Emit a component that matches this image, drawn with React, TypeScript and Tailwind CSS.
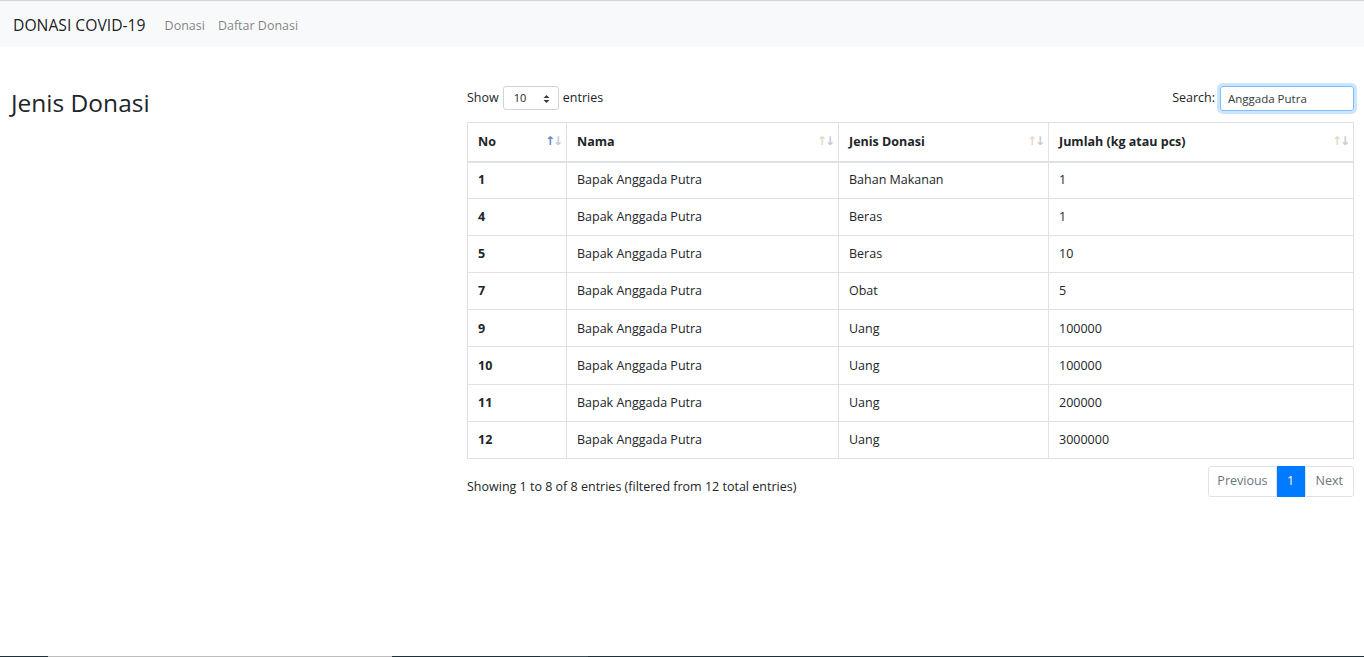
import React, { useState } from 'react'

const rows = [
  { no: 1, nama: 'Bapak Anggada Putra', jenis: 'Bahan Makanan', jumlah: '1' },
  { no: 4, nama: 'Bapak Anggada Putra', jenis: 'Beras', jumlah: '1' },
  { no: 5, nama: 'Bapak Anggada Putra', jenis: 'Beras', jumlah: '10' },
  { no: 7, nama: 'Bapak Anggada Putra', jenis: 'Obat', jumlah: '5' },
  { no: 9, nama: 'Bapak Anggada Putra', jenis: 'Uang', jumlah: '100000' },
  { no: 10, nama: 'Bapak Anggada Putra', jenis: 'Uang', jumlah: '100000' },
  { no: 11, nama: 'Bapak Anggada Putra', jenis: 'Uang', jumlah: '200000' },
  { no: 12, nama: 'Bapak Anggada Putra', jenis: 'Uang', jumlah: '3000000' },
]

const SortIcon = ({ active }: { active?: boolean }) => (
  <span className="absolute right-[5px] top-[12px] font-['DejaVu_Sans',sans-serif] text-[12px] leading-none tracking-[-2px]">
    <span className={active ? 'text-[#5a8cc0]' : 'text-[#e6d9c8]'}>↑</span>
    <span className="text-[#c5cbd3]">↓</span>
  </span>
)

const App = () => {
  const [search, setSearch] = useState('Anggada Putra')

  return (
    <div className="flex min-h-screen flex-col bg-white font-['Open_Sans',sans-serif] text-[#212529]">
      <div className="h-[2px] border-t border-[#d4d6d9] bg-[#f1f2f4]" />
      <nav className="flex h-[45px] items-center bg-[#f8f9fa] px-[13px] pt-[3px]">
        <span className="mr-[19px] text-[15.7px] text-black/90">DONASI COVID-19</span>
        <span className="mr-[13px] text-[12.5px] text-black/50">Donasi</span>
        <span className="text-[12.5px] text-black/50">Daftar Donasi</span>
      </nav>

      <div className="flex flex-1 pt-[38px]">
        <div className="w-[467px] shrink-0 pl-[11px]">
          <h3 className="pt-[3px] text-[24.5px] leading-[1.2]">Jenis Donasi</h3>
        </div>

        <div className="w-[887px] shrink-0 text-[12.5px]">
          <div className="flex h-[26px] items-center justify-between">
            <label className="flex items-center">
              Show
              <span className="relative mx-[4px] flex h-[24px] w-[56px] items-center rounded-[3px] border border-[#ced4da] pl-[10px] text-[11px]">
                10
                <svg className="absolute right-[8px] top-[7px]" width="7" height="10" viewBox="0 0 7 10">
                  <path d="M0.5 4L3.5 1L6.5 4Z M0.5 6L3.5 9L6.5 6Z" fill="#343a40" />
                </svg>
              </span>
              entries
            </label>
            <label className="flex items-center">
              Search:
              <input
                value={search}
                onChange={(e) => setSearch(e.target.value)}
                className="ml-[5px] h-[25px] w-[134px] rounded-[3px] border border-[#80bdff] px-[7px] text-[11.5px] text-[#343a40] shadow-[0_0_0_3px_rgba(0,123,255,0.2)] outline-none"
              />
            </label>
          </div>

          <table className="mt-[11px] w-[887px] border-collapse">
            <thead>
              <tr className="h-[39px]">
                <th className="relative w-[99px] border border-b-2 border-[#dee2e6] px-[10px] pt-[2px] text-left font-bold">
                  No
                  <SortIcon active />
                </th>
                <th className="relative w-[272px] border border-b-2 border-[#dee2e6] px-[10px] pt-[2px] text-left font-bold">
                  Nama
                  <SortIcon />
                </th>
                <th className="relative w-[210px] border border-b-2 border-[#dee2e6] px-[10px] pt-[2px] text-left font-bold">
                  Jenis Donasi
                  <SortIcon />
                </th>
                <th className="relative border border-b-2 border-[#dee2e6] px-[10px] pt-[2px] text-left font-bold">
                  Jumlah (kg atau pcs)
                  <SortIcon />
                </th>
              </tr>
            </thead>
            <tbody>
              {rows.map((r) => (
                <tr key={r.no} className="h-[37.1px]">
                  <td className="border border-[#dee2e6] px-[10px] pt-[1px] font-bold">{r.no}</td>
                  <td className="border border-[#dee2e6] px-[10px] pt-[1px]">{r.nama}</td>
                  <td className="border border-[#dee2e6] px-[10px] pt-[1px]">{r.jenis}</td>
                  <td className="border border-[#dee2e6] px-[10px] pt-[1px]">{r.jumlah}</td>
                </tr>
              ))}
            </tbody>
          </table>

          <div className="mt-[7px] flex items-start justify-between">
            <div className="pt-[12px]">Showing 1 to 8 of 8 entries (filtered from 12 total entries)</div>
            <div className="flex h-[31px] text-[12.5px]">
              <span className="flex items-center rounded-l-[3px] border border-[#dee2e6] px-[8px] text-[#6c757d]">
                Previous
              </span>
              <span className="flex w-[28px] items-center justify-center border border-[#007bff] bg-[#007bff] text-white">
                1
              </span>
              <span className="flex items-center rounded-r-[3px] border border-[#dee2e6] px-[10px] text-[#6c757d]">
                Next
              </span>
            </div>
          </div>
        </div>
      </div>

      <div className="flex h-px">
        <div className="w-[48px] bg-[#1e3039]" />
        <div className="w-[344px] bg-[#bdbdbd]" />
        <div className="w-[148px] bg-[#1e3039]" />
        <div className="w-[48px] bg-[#3a4a52]" />
        <div className="flex-1 bg-[#1e3039]" />
      </div>
    </div>
  )
}

export default App
